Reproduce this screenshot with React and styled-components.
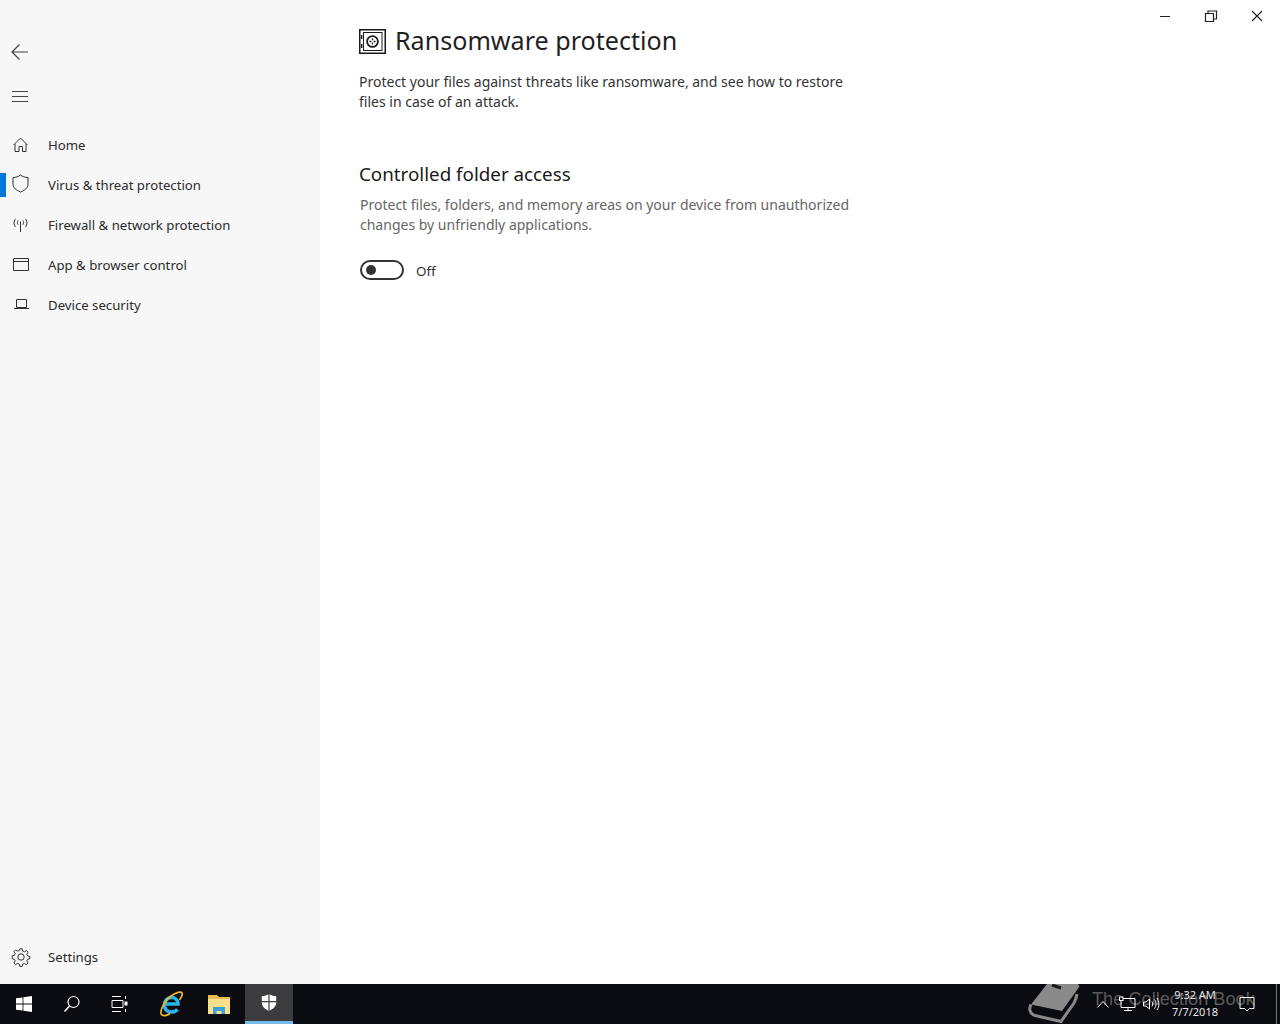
import React from "react";
import styled, { createGlobalStyle } from "styled-components";

const Global = createGlobalStyle`
  html, body { margin: 0; padding: 0; background: #fff; }
  body { font-family: "Noto Sans", "Open Sans", sans-serif; color: #1a1a1a; }
  * { box-sizing: border-box; }
`;
const Page = styled.div`display:flex;flex-direction:column;width:1280px;height:1024px;overflow:hidden;`;
const Main = styled.div`flex:1;display:flex;min-height:0;`;
const Sidebar = styled.aside`width:320px;background:#f7f7f7;display:flex;flex-direction:column;padding-top:32px;padding-bottom:7px;`;
const IconButton = styled.div`height:40px;padding-left:10px;display:flex;align-items:center;margin-bottom:${p=>p.$mb||0}px;color:#444;`;
const Nav = styled.nav`display:flex;flex-direction:column;`;
const NavItem = styled.div`position:relative;height:40px;display:flex;align-items:center;padding-left:10px;font-size:13.2px;color:#2b2b2b;`;
const NavLabel = styled.span``;
const NavIcon = styled.span`width:38px;height:22px;flex:none;display:flex;align-items:center;color:#333;`;
const Active = styled.span`position:absolute;left:0;top:8px;width:6px;height:24px;background:#0078d7;`;
const Spacer = styled.div`flex:1;`;
const Content = styled.main`flex:1;padding:20px 0 0 39px;`;
const TitleRow = styled.div`display:flex;align-items:center;gap:9px;height:42px;`;
const Title = styled.h1`margin:0;font-size:25.1px;font-weight:400;line-height:40px;padding-bottom:2px;color:#1f1f1f;`;
const Lead = styled.p`margin:10px 0 0;width:510px;font-size:14px;line-height:20px;color:#333;`;
const Section = styled.h2`margin:49px 0 0;font-size:18.8px;font-weight:400;line-height:26px;color:#1a1a1a;`;
const Desc = styled.p`margin:8px 0 0 1px;width:510px;font-size:14px;line-height:20px;color:#666;`;
const ToggleRow = styled.div`display:flex;align-items:center;gap:12px;margin:24px 0 0 1px;height:22px;`;
const Track = styled.span`width:44px;height:20px;border:2px solid #333;border-radius:10px;display:flex;align-items:center;padding-left:4px;`;
const Knob = styled.span`width:10px;height:10px;border-radius:50%;background:#333;`;
const ToggleLabel = styled.span`font-size:13.4px;color:#333;padding-top:2px;`;
const Controls = styled.div`display:flex;align-items:flex-start;padding-top:8px;gap:30px;padding-right:15px;height:32px;color:#222;`;
const Taskbar = styled.footer`position:relative;height:40px;background:#0b0b12;display:flex;align-items:center;color:#fff;flex:none;`;
const TaskSlot = styled.div`width:48px;height:40px;display:flex;align-items:center;justify-content:center;flex:none;margin-left:${p=>p.$ml||0}px;background:${p=>p.$active?"#3b3b40":"transparent"};border-bottom:${p=>p.$active?"3px solid #76b9ed":"0"};`;
const Tray = styled.div`margin-left:auto;display:flex;align-items:center;height:40px;`;
const Watermark = styled.div`position:absolute;left:1025px;top:0;height:40px;display:flex;align-items:flex-start;pointer-events:none;`;
const WatermarkText = styled.span`margin:3px 0 0 7px;font-family:"Liberation Sans",Arial,sans-serif;font-size:18.2px;line-height:24px;color:#5a5a5a;white-space:nowrap;`;
const TrayIcon = styled.span`display:flex;align-items:center;justify-content:center;width:${p=>p.$w||24}px;position:relative;`;
const Clock = styled.div`width:64px;text-align:center;position:relative;font-size:11px;line-height:17px;color:#e8e8e8;padding-bottom:2px;`;
const DesktopEdge = styled.span`width:1px;height:40px;background:#777;margin-left:9px;margin-right:3px;`;

const S = ({w=20,h=20,vb,children,...r}) => <svg width={w} height={h} viewBox={vb||`0 0 ${w} ${h}`} fill="none" stroke="currentColor" strokeWidth="1" {...r}>{children}</svg>;

export default function App() {
  return (
    <Page>
      <Global />
      <Main>
        <Sidebar>
          <IconButton $mb={4}><S w={20} h={20}><path d="M2 10H18M9.500 2.500 2 10l7.500 7.500" strokeWidth="1.200"/></S></IconButton>
          <IconButton $mb={9}><S w={20} h={20}><path d="M2 5.500H18M2 10.500H18M2 15.500H18"/></S></IconButton>
          <Nav>
            <NavItem><NavIcon><S w={22} h={22}><path d="M4 11.500 11 4.500l7 7M5.500 10.500V18H9.500V13H13V18H16.500V10.500" transform="translate(-.5 -.5)"/></S></NavIcon><NavLabel>Home</NavLabel></NavItem>
            <NavItem><Active/><NavIcon><S w={22} h={22}><path d="M3 3.500C6 3.500 8.500 2.500 10.500 1c2 1.500 4.500 2.500 7.500 2.500v6.500c0 4-3 6-7.500 8C6 16 3 14 3 10Z"/></S></NavIcon><NavLabel>Virus &amp; threat protection</NavLabel></NavItem>
            <NavItem><NavIcon><S w={22} h={22}><path d="M10.500 7.500V18"/><path d="M8 6.500c-.8 1.200-.8 3 0 4.200M13 6.500c.8 1.200.8 3 0 4.200M5.500 5c-2 2.500-2 5.500 0 8M15.500 5c2 2.500 2 5.500 0 8" /></S></NavIcon><NavLabel>Firewall &amp; network protection</NavLabel></NavItem>
            <NavItem><NavIcon><S w={22} h={22}><path d="M3.500 4.500h15v12h-15zM3.500 7.500h15" /></S></NavIcon><NavLabel>App &amp; browser control</NavLabel></NavItem>
            <NavItem><NavIcon><S w={22} h={22}><path d="M6.500 5.500h10v8h-10zM4 14.500h15"/></S></NavIcon><NavLabel>Device security</NavLabel></NavItem>
          </Nav>
          <Spacer/>
          <NavItem><NavIcon><S w={22} h={22}><circle cx="11" cy="11" r="3.200"/><path d="M9.800 2.800h2.400l.5 2.300 1.700.7 2-1.300 1.700 1.700-1.300 2 .7 1.700 2.300.5v2.400l-2.300.5-.7 1.700 1.300 2-1.700 1.700-2-1.300-1.700.7-.5 2.300H9.800l-.5-2.300-1.700-.7-2 1.300-1.700-1.700 1.300-2-.7-1.700-2.300-.5V9.800l2.300-.5.7-1.700-1.300-2 1.700-1.700 2 1.300 1.700-.7Z"/></S></NavIcon><NavLabel>Settings</NavLabel></NavItem>
        </Sidebar>
        <Content>
          <TitleRow>
            <S w={27} h={25}><rect x=".75" y=".75" width="25.500" height="23.500" strokeWidth="1.500"/><rect x="4.500" y="3.500" width="18.500" height="18"/><circle cx="13.500" cy="12.500" r="5.400" strokeWidth="1.800"/><path d="M13.500 9.500v1.800M13.500 13.700v1.800M10.500 12.500h1.800M14.700 12.500h1.800" strokeWidth="1.400"/><path d="M2.700 6v4M2.700 15v4" strokeWidth="1.400"/></S>
            <Title>Ransomware protection</Title>
          </TitleRow>
          <Lead>Protect your files against threats like ransomware, and see how to restore files in case of an attack.</Lead>
          <Section>Controlled folder access</Section>
          <Desc>Protect files, folders, and memory areas on your device from unauthorized changes by unfriendly applications.</Desc>
          <ToggleRow><Track><Knob/></Track><ToggleLabel>Off</ToggleLabel></ToggleRow>
        </Content>
        <Controls>
          <S w={16} h={16}><path d="M3 8.500H13"/></S>
          <S w={16} h={16}><path d="M2.500 5.500h8v8h-8zM5 5.500V3h8.500v8H10.500" strokeWidth="1.200"/></S>
          <S w={16} h={16}><path d="M3 3l10 10M13 3 3 13" strokeWidth="1.200"/></S>
        </Controls>
      </Main>
      <Taskbar>
        <TaskSlot>
          <svg width="16" height="16" viewBox="0 0 16 16" fill="#fff"><path d="M0 2.300 6.600 1.400V7.600H0ZM7.400 1.300 16 0V7.600H7.400ZM0 8.400H6.600V14.600L0 13.700ZM7.400 8.400H16V16L7.400 14.700Z"/></svg>
        </TaskSlot>
        <TaskSlot><S w={18} h={18}><circle cx="10.500" cy="7" r="5.500" strokeWidth="1.200"/><path d="M6.500 11 1.500 16.500" strokeWidth="1.500"/></S></TaskSlot>
        <TaskSlot><S w={18} h={18}><path d="M1 1.500h9M1 16.500h9M1 5.500h11v7H1zM14.500 1v3M14.500 14v3"/><rect x="14" y="7" width="2" height="3" fill="currentColor"/></S></TaskSlot>
        <TaskSlot $ml={3}>
          <svg width="24" height="26" viewBox="0 0 24 26" fill="none">
            <path d="M7 13h12C19 9 16 6.500 12.500 6.500 8.500 6.500 5.500 9.500 5.500 14c0 4.500 3 7 7 7 2.500 0 4.500-.8 6-2.500" stroke="#2db2e8" strokeWidth="3.600"/>
            <path d="M3 24C0 22 4 11 12 5 17 1.500 22 0 23 2c1 2-1 5-2.500 7" stroke="#efb92f" strokeWidth="1.700"/>
            <path d="M3 24c2 1.500 6 0 8-1.500" stroke="#efb92f" strokeWidth="1.700"/>
          </svg>
        </TaskSlot>
        <TaskSlot>
          <svg width="22" height="19" viewBox="0 0 22 19"><path d="M0 0h9l2 2h11v17H0Z" fill="#e8b94e"/><path d="M0 4h22v15H0Z" fill="#fbe08a"/><path d="M5 19v-7h12v7h-3.500v-3h-5v3Z" fill="#3ba1d9"/></svg>
        </TaskSlot>
        <TaskSlot $ml={2} $active>
          <svg width="16" height="17" viewBox="0 0 18 20"><path d="M9 0c2 1.500 5 2.500 8.500 2.500V10c0 4.500-3.500 7.500-8.500 10C4 17.500.5 14.500.5 10V2.500C4 2.500 7 1.500 9 0Z" fill="#fff"/><path d="M9 0v20M0 9h18" stroke="#3b3b40" strokeWidth="1.400"/></svg>
        </TaskSlot>
        <Watermark>
          <svg width="60" height="40" viewBox="0 0 60 40" fill="none">
            <path d="M22 0H53l1.500 2.500L37 27 6 20.500Z" fill="#8a8a8a"/>
            <path d="M27 1l9 3" stroke="#1c1c1f" strokeWidth="3"/>
            <path d="M6 20.500C3.500 25 5 30 10 31.500L36 37.500 49 19c1.500-2.500 2.500-5.500 3-9" stroke="#8a8a8a" strokeWidth="3"/>
          </svg>
          <WatermarkText>The Collection Book</WatermarkText>
        </Watermark>
        <Tray>
          <TrayIcon><S w={14} h={10}><path d="M1.500 8.500 7 2.500l5.500 6"/></S></TrayIcon>
          <TrayIcon><S w={18} h={18}><path d="M3 3.500h14v9H3zM10 12.500v3M6 15.500h8"/><rect x="1.500" y="2" width="3.500" height="3.500" fill="#0b0b12"/></S></TrayIcon>
          <TrayIcon><S w={18} h={18}><path d="M1.500 7h2.500l3.500-3v10L4 11H1.500Z"/><path d="M10 6.500c1 1.500 1 3.500 0 5M12.500 4.500c2 2.500 2 6.500 0 9M15 3c2.500 3.500 2.500 8.500 0 12"/></S></TrayIcon>
          <Clock>9:32 AM<br/>7/7/2018</Clock>
          <TrayIcon $w={40}><S w={18} h={18}><path d="M2 2.500h14v11h-4.500L9 16l-2.500-2.500H2Z"/></S></TrayIcon>
          <DesktopEdge/>
        </Tray>
      </Taskbar>
    </Page>
  );
}
